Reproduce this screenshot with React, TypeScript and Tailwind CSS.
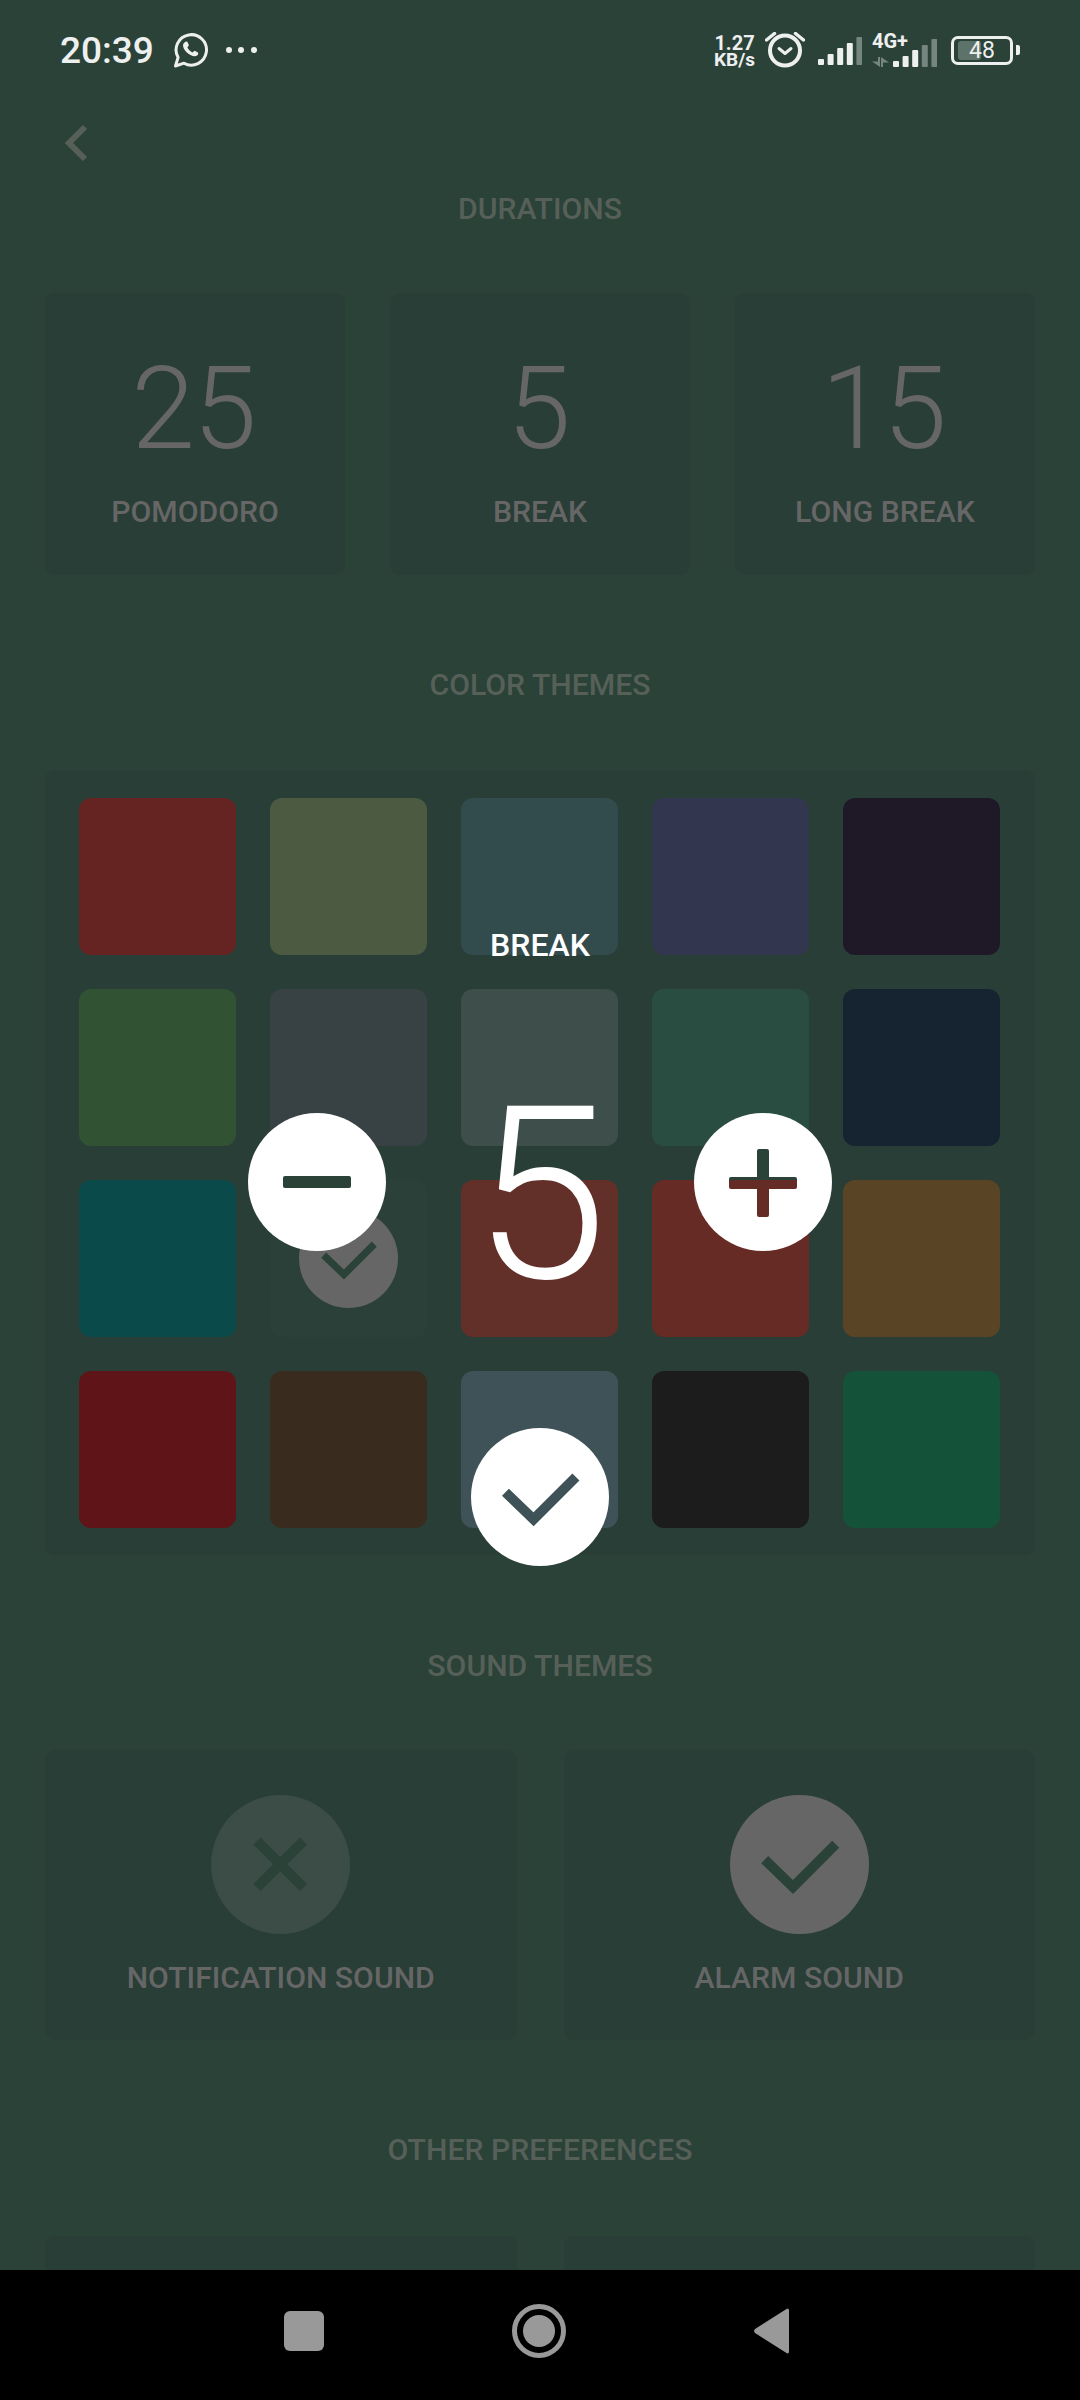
import React from "react";

const swatches = [
  "bg-[#652322]", "bg-[#4c5a41]", "bg-[#324c4e]", "bg-[#32364e]", "bg-[#1f1927]",
  "bg-[#325234]", "bg-[#384245]", "bg-[#3e4e4a]", "bg-[#2a4d42]", "bg-[#162432]",
  "bg-[#0a4a4b]", "bg-[#2a4038]", "bg-[#622f29]", "bg-[#672b25]", "bg-[#594425]",
  "bg-[#5f1418]", "bg-[#392b1e]", "bg-[#3e5258]", "bg-[#1c1c1c]", "bg-[#145239]",
];

function Check({ color, className }: { color: string; className: string }) {
  return (
    <svg viewBox="0 0 139 139" className={className}>
      <polyline points="34.700,64.700 63,92 105.700,49.300" fill="none" stroke={color} strokeWidth="10" strokeLinejoin="miter" strokeLinecap="butt" />
    </svg>
  );
}

function Bars({ dim }: { dim: number }) {
  const hs = [6, 11, 17, 22, 28];
  return (
    <svg width="44" height="28" viewBox="0 0 44 28">
      {hs.map((h, i) => (
        <rect key={i} x={i * 9.6} y={28 - h} width="6" height={h} rx="1" fill={i >= 5 - dim ? "#75857f" : "#eef0ef"} />
      ))}
    </svg>
  );
}

function Heading({ children, className }: { children: React.ReactNode; className: string }) {
  return <div className={`h-[44px] pt-[2px] flex items-center justify-center text-[30.2px] font-medium text-[#566059] ${className}`}>{children}</div>;
}

function Duration({ value, label }: { value: string; label: string }) {
  return (
    <div className="h-[282px] rounded-[10px] bg-[#293e36] flex flex-col items-center pt-[58px]">
      <div className="pr-[4px] text-[115px] leading-[115px] tracking-[-2px] font-light text-[#666666]">{value}</div>
      <div className="mt-[28px] h-[36px] flex items-center text-[30.2px] font-medium text-[#666666]">{label}</div>
    </div>
  );
}

export default function App() {
  return (
    <div className="relative w-[1080px] h-[2400px] overflow-hidden bg-[#2b4238] font-[Roboto,sans-serif] flex flex-col">
      <div className="flex-1 overflow-hidden">
        {/* status bar */}
        <div className="h-[100px] flex items-center justify-between pl-[60px] pr-[60px] text-[#eef0ef]">
          <div className="flex items-center">
            <span className="text-[37px] font-medium leading-none">20:39</span>
            <svg width="36" height="36" viewBox="0 0 36 36" className="ml-[19px]">
              <path d="M2.500 34l2.600-8.600A15.200 15.200 0 1 1 11 31.200z" fill="none" stroke="#eef0ef" strokeWidth="3" strokeLinejoin="round" />
              <path d="M11.500 10.500c1-1.200 2.800-1.200 3.400.2l1 2.500-1.500 2.200c1 2 2.800 3.900 5 5l2.100-1.600 2.700 1.100c1.400.6 1.400 2.300.2 3.300-1.800 1.500-4 1.200-6.900-.2-2.900-1.400-5.300-3.800-6.700-6.600-1.200-2.500-1-4.600.7-5.900z" fill="#eef0ef" />
            </svg>
            <div className="ml-[17px] flex gap-[6.5px]">
              <span className="w-[6px] h-[6px] rounded-full bg-[#eef0ef]" />
              <span className="w-[6px] h-[6px] rounded-full bg-[#eef0ef]" />
              <span className="w-[6px] h-[6px] rounded-full bg-[#eef0ef]" />
            </div>
          </div>
          <div className="flex items-center">
            <div className="flex flex-col items-center font-bold text-[20px] leading-[18px] mt-[2px]">
              <span>1.27</span>
              <span className="text-[19px] leading-[16px]">KB/s</span>
            </div>
            <svg width="40" height="36" viewBox="0 0 40 36" className="ml-[10px]" fill="none" stroke="#eef0ef">
              <circle cx="20" cy="18.500" r="15" strokeWidth="4" />
              <polyline points="14,16.500 20,21.500 26,16.500" strokeWidth="3" strokeLinecap="round" strokeLinejoin="round" />
              <line x1="1.500" y1="8" x2="9.500" y2="1.500" strokeWidth="3.500" strokeLinecap="round" />
              <line x1="38.500" y1="8" x2="30.500" y2="1.500" strokeWidth="3.500" strokeLinecap="round" />
            </svg>
            <div className="ml-[13px] mt-[2px]">
              <Bars dim={1} />
            </div>
            <div className="ml-[10px] relative w-[65px] h-[32px] mt-[2px] flex items-end justify-end">
              <span className="absolute left-0 -top-[3px] text-[20px] font-bold leading-[18px]">4G+</span>
              <svg width="17" height="10" viewBox="0 0 17 10" className="absolute left-0 bottom-0">
                <path d="M6 0h2v10L0 4.500h6z M11 10H9V0l8 5.500h-6z" fill="#75857f" />
              </svg>
              <Bars dim={2} />
            </div>
            <div className="ml-[14px] flex items-center">
              <div className="relative w-[62px] h-[29px] rounded-[7px] border-[3px] border-[#eef0ef] flex items-center justify-center">
                <div className="absolute left-[4px] top-[2px] w-[23px] h-[19px] rounded-[3px] bg-[#5d7269]" />
                <span className="relative text-[23px] leading-none">48</span>
              </div>
              <div className="ml-[3px] w-[4px] h-[10px] rounded-r-[2px] bg-[#eef0ef]" />
            </div>
          </div>
        </div>

        {/* back */}
        <div className="h-[86px] flex items-center pl-[64px]">
          <svg width="24" height="38" viewBox="0 0 24 38" fill="none" stroke="#566059" strokeWidth="6">
            <polyline points="21,3 5,19 21,35" />
          </svg>
        </div>

        <div className="px-[45px]">
          <Heading className="">DURATIONS</Heading>
          <div className="mt-[63px] grid grid-cols-3 gap-[45px]">
            <Duration value="25" label="POMODORO" />
            <Duration value="5" label="BREAK" />
            <Duration value="15" label="LONG BREAK" />
          </div>

          <Heading className="mt-[87px]">COLOR THEMES</Heading>
          <div className="mt-[64px] rounded-[10px] bg-[#293e36] px-[34px] pt-[28px] pb-[27px] grid grid-cols-[repeat(5,157px)] auto-rows-[157px] gap-[34px]">
            {swatches.map((c, i) => (
              <div key={i} className={`rounded-[12px] flex items-center justify-center ${c}`}>
                {i === 11 && (
                  <div className="w-[99px] h-[99px] rounded-full bg-[#666666]">
                    <Check color="#2b4238" className="w-full h-full" />
                  </div>
                )}
              </div>
            ))}
          </div>

          <Heading className="mt-[88px]">SOUND THEMES</Heading>
          <div className="mt-[63px] grid grid-cols-2 gap-[47px]">
            <div className="h-[290px] rounded-[10px] bg-[#293e36] flex flex-col items-center pt-[45px]">
              <div className="w-[139px] h-[139px] rounded-full bg-[#3b4d46]">
                <svg viewBox="0 0 139 139" className="w-full h-full">
                  <path d="M46 46L92.500 92.500M92.500 46L46 92.500" fill="none" stroke="#2b4238" strokeWidth="10" strokeLinecap="butt" />
                </svg>
              </div>
              <div className="mt-[26px] h-[36px] flex items-center text-[30.2px] font-medium text-[#666666]">NOTIFICATION SOUND</div>
            </div>
            <div className="h-[290px] rounded-[10px] bg-[#293e36] flex flex-col items-center pt-[45px]">
              <div className="w-[139px] h-[139px] rounded-full bg-[#666666]">
                <Check color="#2b4238" className="w-full h-full" />
              </div>
              <div className="mt-[26px] h-[36px] flex items-center text-[30.2px] font-medium text-[#666666]">ALARM SOUND</div>
            </div>
          </div>

          <Heading className="mt-[87px]">OTHER PREFERENCES</Heading>
          <div className="mt-[65px] grid grid-cols-2 gap-[47px]">
            <div className="h-[290px] rounded-[10px] bg-[#293e36]" />
            <div className="h-[290px] rounded-[10px] bg-[#293e36]" />
          </div>
        </div>
      </div>

      {/* nav bar */}
      <div className="h-[130px] shrink-0 bg-black flex items-center justify-center gap-[188px] pr-[6px] pb-[8px]">
        <div className="w-[40px] h-[40px] rounded-[6px] bg-[#999999]" />
        <div className="w-[54px] h-[54px] rounded-full border-[5px] border-[#999999] flex items-center justify-center">
          <div className="w-[32px] h-[32px] rounded-full bg-[#999999]" />
        </div>
        <svg width="36" height="46" viewBox="0 0 36 46">
          <path d="M35 2v42a1.500 1.500 0 0 1-2.500 1L1 25a3 3 0 0 1 0-4L32.500 1a1.500 1.500 0 0 1 2.500 1z" fill="#999999" />
        </svg>
      </div>

      {/* timer editor overlay */}
      <div className="absolute inset-x-0 top-[923px] flex flex-col items-center text-white">
        <div className="h-[44px] flex items-center text-[32px] font-medium">BREAK</div>
        <div className="mt-[146px] w-[584px] h-[138px] flex items-center justify-between">
          <div className="w-[138px] h-[138px] rounded-full bg-white flex items-center justify-center">
            <div className="w-[68px] h-[12px] rounded-[2px] bg-[#2b4238]" />
          </div>
          <div className="mt-[26px] text-[242px] leading-[240px] font-light">5</div>
          <div className="w-[138px] h-[138px] rounded-full bg-white">
            <svg viewBox="0 0 138 138" className="w-full h-full">
              <path d="M35 66a2 2 0 0 1 2-2h26V38a2 2 0 0 1 2-2h8a2 2 0 0 1 2 2v26h26a2 2 0 0 1 2 2v1H35z" fill="#2b4238" />
              <path d="M35 67h68v7a2 2 0 0 1-2 2H75v26a2 2 0 0 1-2 2h-8a2 2 0 0 1-2-2V76H37a2 2 0 0 1-2-2z" fill="#652b25" />
            </svg>
          </div>
        </div>
        <div className="mt-[177px] w-[138px] h-[138px] rounded-full bg-white">
          <Check color="#3e5258" className="w-full h-full" />
        </div>
      </div>
    </div>
  );
}
